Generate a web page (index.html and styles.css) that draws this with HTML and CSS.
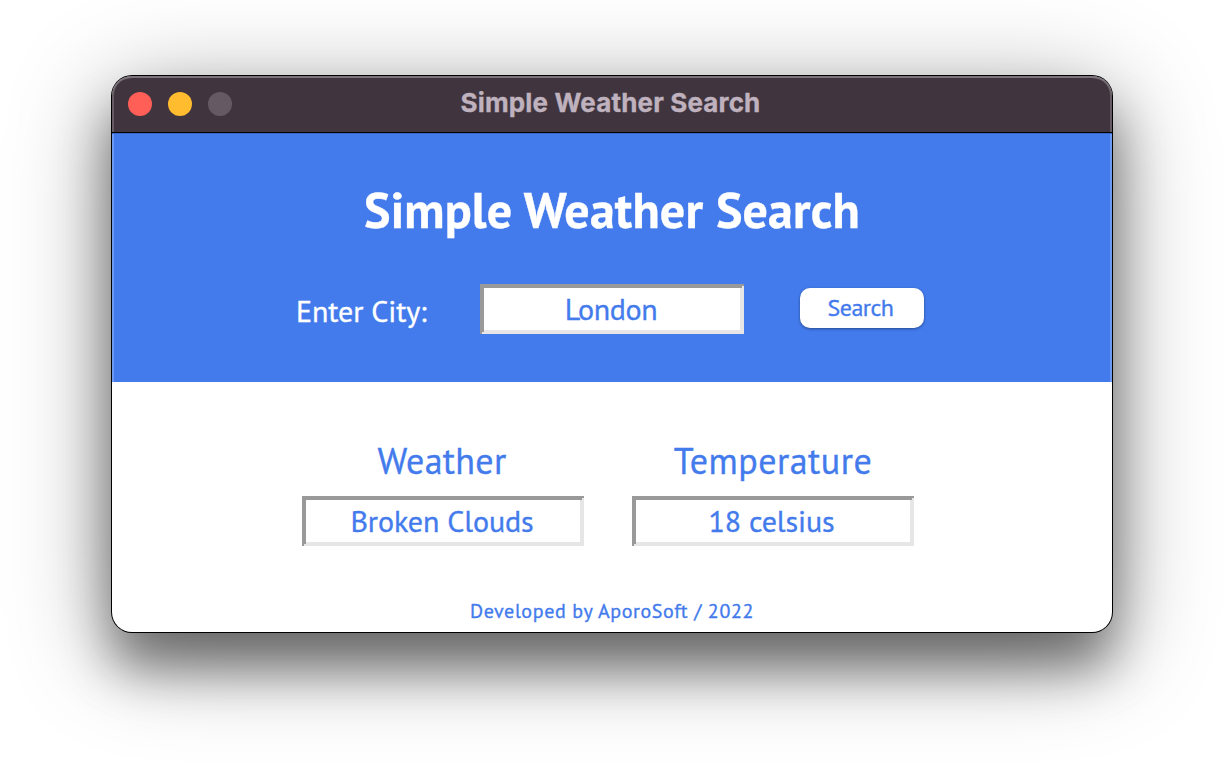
FILE: index.html
```
<!DOCTYPE html>
<html lang="en">
<head>
<meta charset="utf-8">
<title>Simple Weather Search</title>
<link rel="stylesheet" href="styles.css">
</head>
<body>
<main class="window">
  <header class="titlebar">
    <div class="lights">
      <span class="light close"></span>
      <span class="light minimize"></span>
      <span class="light zoom"></span>
    </div>
    <div class="caption">Simple Weather Search</div>
  </header>
  <section class="search">
    <h1 class="heading">Simple Weather Search</h1>
    <form class="search-row">
      <label class="city-label">Enter City:</label>
      <div class="field city-field">London</div>
      <button class="search-button" type="button">Search</button>
    </form>
  </section>
  <section class="results">
    <div class="result">
      <h2 class="result-title">Weather</h2>
      <div class="field">Broken Clouds</div>
    </div>
    <div class="result">
      <h2 class="result-title temperature-title">Temperature</h2>
      <div class="field degrees">18 celsius</div>
    </div>
  </section>
  <footer class="credit">Developed by AporoSoft / 2022</footer>
</main>
</body>
</html>
```
FILE: styles.css
```
* { box-sizing: border-box; }
body {
  margin: 0;
  height: 780px;
  padding: 76px 112px 0;
  overflow: hidden;
  background: #fff;
  font-family: "PT Sans", "Noto Sans", "Open Sans", sans-serif;
}
.window {
  display: flex;
  flex-direction: column;
  width: 1000px;
  height: 556px;
  border-radius: 20px;
  background: #fff;
  color: #437bec;
  box-shadow: 0 0 0 1px #000, 0 36px 50px rgba(0, 0, 0, 0.42), 0 20px 100px rgba(0, 0, 0, 0.42);
  -webkit-text-stroke: 0.35px currentColor;
}
.titlebar {
  display: flex;
  align-items: center;
  height: 57px;
  padding: 0 16px;
  border-bottom: 1px solid #000;
  border-radius: 20px 20px 0 0;
  background: #40353e;
  box-shadow: inset 0 2px 0 #7b747a, inset 2px 0 0 #655c63, inset -2px 0 0 #655c63;
}
.lights { display: flex; gap: 16px; width: 104px; }
.light { width: 24px; height: 24px; border-radius: 50%; }
.close { background: #ff5f57; }
.minimize { background: #febc2e; }
.zoom { background: #655a63; }
.caption {
  flex: 1;
  padding: 0 107px 2px 0;
  font: 700 26px/32px Inter, sans-serif;
  letter-spacing: 0.15px;
  text-align: center;
  color: #bfb2be;
}
.search {
  height: 249px;
  padding-top: 43px;
  background: #437bec;
  box-shadow: inset 0 1px 0 #3868c8, inset 2px 0 0 #6d99f2, inset -2px 0 0 #6d99f2;
  color: #fff;
}
.heading {
  margin: 0;
  font-size: 50px;
  line-height: 68px;
  letter-spacing: 0.15px;
  text-align: center;
}
.search-row { display: flex; align-items: flex-start; padding-top: 40px; }
.city-label {
  width: 132px;
  margin: 7px 52px 0 184px;
  font-size: 30px;
  line-height: 40px;
  letter-spacing: -0.1px;
  white-space: nowrap;
}
.field {
  width: 282px;
  height: 50px;
  padding: 4px 6px 4px 4px;
  background: #fff;
  box-shadow:
    inset 0 2px #999, inset 2px 0 #999, inset -2px 0 #e6e6e6, inset 0 -2px #e6e6e6,
    inset 0 4px #999, inset 4px 0 #999, inset -4px -4px #e6e6e6;
  color: #437bec;
  font-size: 30px;
  line-height: 41px;
  letter-spacing: -0.1px;
  text-align: center;
}
.city-field { width: 264px; letter-spacing: -0.4px; }
.degrees { padding-right: 7px; }
.search-button {
  width: 124px;
  height: 40px;
  margin: 4px 0 0 56px;
  padding: 0 3px 1px 0;
  border: 0;
  border-radius: 10px;
  background: #fff;
  box-shadow: 0 1px 3px rgba(0, 0, 0, 0.4);
  color: #437bec;
  font: 24px/39px "PT Sans", "Noto Sans", sans-serif;
  letter-spacing: -0.5px;
  -webkit-text-stroke: 0.35px currentColor;
}
.results { display: flex; gap: 48px; height: 210px; padding: 54px 0 0 190px; }
.result { width: 282px; }
.result-title {
  margin: 0 0 11px;
  padding-right: 2px;
  font-size: 36px;
  font-weight: 400;
  line-height: 49px;
  letter-spacing: 0.3px;
  text-align: center;
}
.temperature-title { padding: 0; letter-spacing: 0.5px; }
.credit { font-size: 20px; line-height: 38px; letter-spacing: 0.62px; text-align: center; }
```
